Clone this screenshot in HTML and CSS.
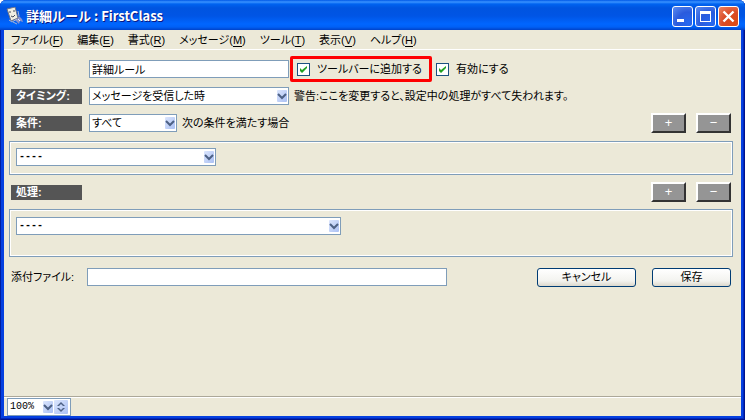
FILE: index.html
```html
<!DOCTYPE html>
<html lang="ja">
<head>
<meta charset="utf-8">
<title>詳細ルール : FirstClass</title>
<link rel="stylesheet" href="styles.css">
</head>
<body>
<svg class="defs" aria-hidden="true">
  <defs>
    <linearGradient id="face" x1="0" y1="0" x2="1" y2="1">
      <stop offset="0" stop-color="#dce6fd"/>
      <stop offset="1" stop-color="#aac0f3"/>
    </linearGradient>
    <symbol id="drop" viewBox="0 0 10 12">
      <rect width="10" height="12" rx="1" fill="url(#face)"/>
      <path d="M1 4L5 8L9 4" fill="none" stroke="#4d6185" stroke-width="2"/>
    </symbol>
    <symbol id="tick" viewBox="0 0 13 13">
      <path d="M3 5v3l2 2 5-5V3L5 7z" fill="#21a121"/>
    </symbol>
  </defs>
</svg>
<div class="window">
  <header class="titlebar">
    <svg class="app-icon" viewBox="0 0 18 18" aria-hidden="true">
      <path d="M9 13l4-4 3 3 1 3-3-1-1 3z" fill="#8793cf"/>
      <path d="M1 2l8-2 3 11-7 3z" fill="#f0eee2" stroke="#6c7488" stroke-width="1"/>
      <path d="M4 4v2M8 3v2M5 9l2 1 2-2" fill="none" stroke="#444b5c" stroke-width="1"/>
      <path d="M3 13l3 2 5-3M12 4l1 5M7 15l4 2" fill="none" stroke="#a7b4d8" stroke-width="1"/>
      <path d="M12 12l2 2" stroke="#e8ecfa" stroke-width="1"/>
    </svg>
    <h1 class="title">詳細ルール : FirstClass</h1>
    <div class="window-buttons">
      <button class="window-button" type="button" aria-label="最小化"><svg viewBox="0 0 21 21"><path d="M5 13h7v3H5z" fill="#fff"/></svg></button>
      <button class="window-button" type="button" aria-label="最大化"><svg viewBox="0 0 21 21"><path d="M5 5h11v11H5zM6 8v7h9V8z" fill="#fff" fill-rule="evenodd"/></svg></button>
      <button class="window-button close" type="button" aria-label="閉じる"><svg viewBox="0 0 21 21"><path d="M5.500 5.500l10 10M15.500 5.500l-10 10" stroke="#fff" stroke-width="2.400"/></svg></button>
    </div>
  </header>
  <div class="client">
    <nav class="menubar">
      <button type="button">ファイル(<u>F</u>)</button>
      <button type="button">編集(<u>E</u>)</button>
      <button type="button">書式(<u>R</u>)</button>
      <button type="button">メッセージ(<u>M</u>)</button>
      <button type="button">ツール(<u>T</u>)</button>
      <button type="button">表示(<u>V</u>)</button>
      <button type="button">ヘルプ(<u>H</u>)</button>
    </nav>
    <form class="form">
      <div class="row name-row">
        <label class="caption" for="name">名前:</label>
        <input class="field medium" id="name" type="text" value="詳細ルール">
        <label class="check highlighted"><span class="box"><input type="checkbox" checked><svg><use href="#tick"/></svg></span>ツールバーに追加する</label>
        <label class="check"><span class="box"><input type="checkbox" checked><svg><use href="#tick"/></svg></span>有効にする</label>
      </div>
      <div class="row timing-row">
        <label class="tag" for="timing">タイミング:</label>
        <span class="combo medium"><select id="timing"><option>メッセージを受信した時</option></select><svg><use href="#drop"/></svg></span>
        <span class="note">警告:ここを変更すると、設定中の処理がすべて失われます。</span>
      </div>
      <div class="row">
        <label class="tag" for="match">条件:</label>
        <span class="combo small"><select id="match"><option>すべて</option></select><svg><use href="#drop"/></svg></span>
        <span class="note">次の条件を満たす場合</span>
        <div class="step-buttons">
          <button class="step" type="button">+</button>
          <button class="step" type="button">−</button>
        </div>
      </div>
      <div class="group">
        <span class="combo medium unset"><select aria-label="条件"><option>----</option></select><svg><use href="#drop"/></svg></span>
      </div>
      <div class="row">
        <span class="tag">処理:</span>
        <div class="step-buttons">
          <button class="step" type="button">+</button>
          <button class="step" type="button">−</button>
        </div>
      </div>
      <div class="group action">
        <span class="combo large unset"><select aria-label="処理"><option>----</option></select><svg><use href="#drop"/></svg></span>
      </div>
      <div class="row footer-row">
        <label class="caption attach" for="attachment">添付ファイル:</label>
        <input class="field wide" id="attachment" type="text">
        <div class="actions">
          <button class="push cancel" type="button">キャンセル</button>
          <button class="push" type="submit">保存</button>
        </div>
      </div>
    </form>
    <footer class="statusbar">
      <div class="zoom">
        <span class="combo percent"><select aria-label="表示倍率"><option>100%</option></select><svg><use href="#drop"/></svg></span>
        <button class="spinner" type="button" aria-label="倍率を増減"><svg viewBox="0 0 14 14"><rect width="14" height="14" rx="1" fill="url(#face)"/><path d="M3 6l4-4 4 4H9L7 4 5 6zM3 8h2l2 2 2-2h2l-4 4z" fill="#4d6185"/></svg></button>
      </div>
    </footer>
  </div>
</div>
</body>
</html>
```
FILE: styles.css
```css
* { box-sizing: border-box; }

body {
  margin: 0;
  background: #fff;
  color: #000;
  font: 11px/16px "Liberation Sans", "Noto Sans CJK JP", sans-serif;
  font-feature-settings: "palt";
}

button, input, select {
  margin: 0;
  padding: 0;
  border: 0;
  color: inherit;
  font: inherit;
  font-feature-settings: inherit;
}

.defs { position: absolute; width: 0; height: 0; }

.window {
  display: flex;
  flex-direction: column;
  min-height: 100vh;
  padding: 0 4px 4px;
  border-radius: 6px 6px 0 0;
  background: #0540e0;
  box-shadow: inset 1px 0 #001ea0, inset -1px -1px #00138c, inset -2px -2px #0028bd;
}

.titlebar {
  display: flex;
  align-items: center;
  height: 30px;
  margin: 0 -4px;
  padding: 2px 6px 0;
  border-radius: 6px 6px 0 0;
  background: linear-gradient(#0058e6 0, #3a93ff 2px, #0063f0 4px, #0054e0 8px, #0055e5 16px, #0066ff 24px, #0060f6 27px, #0042c8 30px);
}

.app-icon { width: 18px; height: 18px; }

.title {
  margin: 0 auto 0 2px;
  color: #fff;
  font: bold 13px/20px "Noto Sans CJK JP", sans-serif;
  font-feature-settings: normal;
  text-shadow: 1px 1px #0a1883;
}

.window-buttons { display: flex; gap: 2px; }

.window-button {
  width: 21px;
  height: 21px;
  border: 1px solid #fff;
  border-radius: 3px;
  background: radial-gradient(circle at 80% 85%, #2668f0, #2a5bdd 50%, #5c8cf0);
}

.window-button svg { display: block; width: 21px; height: 21px; margin: -1px; }
.close { background: radial-gradient(circle at 80% 85%, #dc4a14, #da4b27 50%, #ee8463); }

.client {
  display: flex;
  flex: 1;
  flex-direction: column;
  background: #ece9d8;
}

.menubar {
  display: flex;
  gap: 14px;
  height: 20px;
  padding-left: 7px;
  border-bottom: 1px solid #fff;
}

.menubar button { background: none; line-height: 18px; white-space: nowrap; }
.menubar u { text-underline-offset: 2px; }

.form { flex: 1; padding: 6px 8px 0 5px; }

.row {
  display: flex;
  align-items: center;
  height: 20px;
  padding-left: 2px;
  white-space: nowrap;
}

.name-row { height: 26px; }
.timing-row { height: 18px; margin: 5px 0 8px; }

.caption { flex: none; width: 78px; }
.attach { width: 76px; }

.tag {
  flex: none;
  width: 71px;
  margin-right: 7px;
  padding-left: 5px;
  background: #555;
  color: #fff;
  font-weight: bold;
  line-height: 15px;
}

.field {
  height: 18px;
  padding: 0 2px;
  border: 1px solid #7f9db9;
  background: #fff;
}

.medium { width: 200px; }
.small { width: 88px; }
.large { width: 325px; }
.wide { width: 360px; }

.combo { position: relative; display: inline-flex; height: 18px; }

.combo select {
  width: 100%;
  height: 100%;
  padding: 0 16px 0 2px;
  border: 1px solid #7f9db9;
  border-radius: 0;
  appearance: none;
  background: #fff;
}

.combo svg {
  position: absolute;
  top: 3px;
  right: 2px;
  width: 10px;
  height: 12px;
  pointer-events: none;
}

.unset, .percent { font-family: "Liberation Mono", monospace; font-size: 10px; }
.unset { font-weight: bold; }

.note { margin-left: 5px; }

.check { display: flex; align-items: center; gap: 7px; margin-left: 4px; }
.highlighted { width: 142px; height: 26px; margin-left: 1px; padding-left: 4px; border: 3px solid #f00; border-radius: 2px; }

.box { position: relative; display: flex; }
.box input { width: 13px; height: 13px; border: 1px solid #1c5180; appearance: none; background: #fff; }
.box svg { position: absolute; inset: 0; width: 13px; height: 13px; pointer-events: none; }

.step-buttons { display: flex; gap: 10px; margin: 0 2px 0 auto; }

.step {
  width: 35px;
  height: 20px;
  border: 2px solid;
  border-color: #fff #333 #333 #fff;
  background: #959595;
  color: #fff;
  font-size: 13px;
  line-height: 14px;
}

.group {
  height: 34px;
  margin: 8px 0 7px;
  padding: 5px;
  border: 1px solid #7f9db9;
  box-shadow: inset 0 0 0 1px #fff;
}

.group .combo { margin-left: 1px; margin-top: 1px; }
.action { height: 48px; margin: 7px 0 10px; padding-top: 6px; }

.actions { display: flex; gap: 16px; margin: 0 2px 0 auto; }

.push {
  width: 79px;
  height: 19px;
  border: 1px solid #003c74;
  border-radius: 3px;
  background: linear-gradient(#fff, #f3f3ef 70%, #dcd8cc);
  line-height: 15px;
}

.cancel { width: 99px; }

.statusbar {
  padding-left: 3px;
  border-top: 1px solid #aca899;
  box-shadow: inset 0 1px #fff;
}

.zoom {
  display: flex;
  align-items: center;
  width: 64px;
  height: 18px;
  margin-top: 1px;
  border: 1px solid #7f9db9;
  background: #fff;
}

.percent { width: 46px; height: 16px; }
.percent select { padding-left: 2px; border: 0; }
.percent svg { top: 2px; right: 1px; }
.spinner { width: 14px; height: 14px; background: none; }
.spinner svg { display: block; width: 14px; height: 14px; }
```
